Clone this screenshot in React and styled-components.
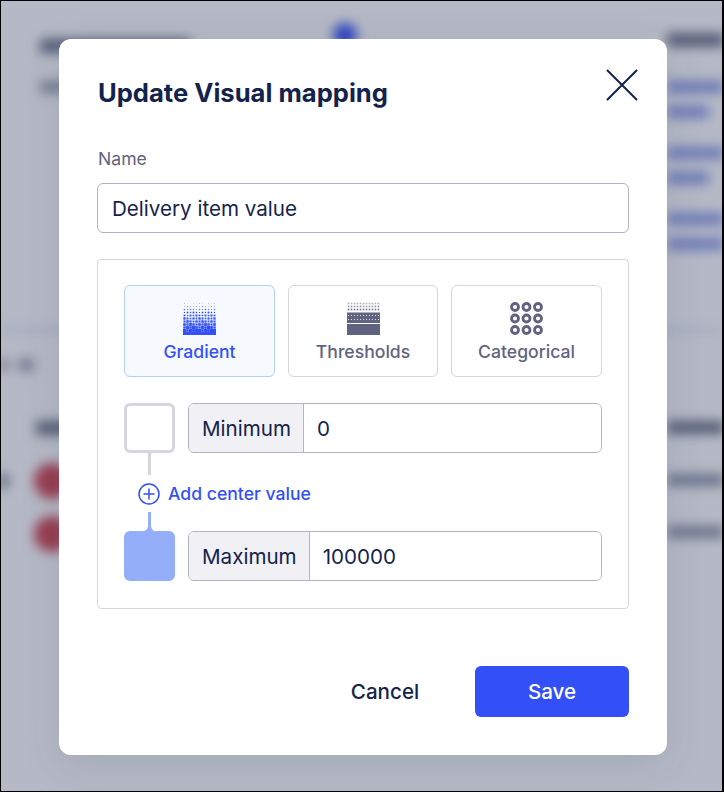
import styled, { createGlobalStyle } from "styled-components";

const GlobalStyle = createGlobalStyle`
  html, body {
    margin: 0;
    padding: 0;
    background: #fff;
  }
  * {
    box-sizing: border-box;
  }
`;

const Page = styled.div`
  position: relative;
  width: 724px;
  height: 792px;
  overflow: hidden;
  font-family: Inter, "Liberation Sans", sans-serif;
  color: #14234b;
`;

/* the page behind the dialog, unreadable in the reference */
const Backdrop = styled.div`
  height: 100%;
  filter: blur(6px);
  display: flex;
  flex-direction: column;
`;

const BackdropTop = styled.div`
  height: 333px;
  flex: none;
  display: flex;
  justify-content: space-between;
  border-bottom: 5px solid #dfe3f5;
  padding: 23px 0 0 40px;
`;

const BackdropColumn = styled.div`
  width: ${(p) => p.$width}px;
  flex: none;
  display: flex;
  flex-direction: column;
  gap: ${(p) => p.$gap || 0}px;
`;

const BackdropRadio = styled.div`
  width: 24px;
  height: 24px;
  border-radius: 50%;
  background: #3350f7;
  margin: 0 0 0 293px;
`;

const Smear = styled.div`
  width: ${(p) => p.$width}px;
  height: ${(p) => p.$height || 12}px;
  flex: none;
  background: ${(p) => p.$color || "#6a7084"};
  margin-top: ${(p) => p.$top || 0}px;
  margin-left: ${(p) => p.$left || 0}px;
`;

const BackdropBottom = styled.div`
  flex: 1;
  display: flex;
  justify-content: space-between;
  padding-top: 26px;
`;

const BackdropFilter = styled.div`
  display: flex;
  gap: 10px;
`;

const BackdropCircles = styled.div`
  display: flex;
  flex-direction: column;
  gap: 17px;
  margin-top: 28px;
`;

const BackdropDotRow = styled.div`
  display: flex;
  align-items: center;
  gap: 26px;
`;

const BackdropDot = styled.div`
  width: 36px;
  height: 36px;
  border-radius: 50%;
  background: #d2434e;
`;

const Overlay = styled.div`
  position: absolute;
  inset: 0;
  background: rgba(43, 55, 89, 0.35);
  border: 1px solid #000;
  border-right-width: 2px;
  display: flex;
  justify-content: center;
  padding: 38px 0 0 3px;
`;

const Dialog = styled.div`
  width: 608px;
  height: 716px;
  background: #fff;
  border-radius: 12px;
  box-shadow: 0 10px 40px rgba(43, 55, 89, 0.12);
  padding: 31px 38px 38px;
  display: flex;
  flex-direction: column;
`;

const Header = styled.div`
  display: flex;
  justify-content: space-between;
  align-items: flex-start;
  height: 77px;
`;

const Title = styled.h2`
  margin: 6px 0 0 1px;
  font-size: 25.6px;
  line-height: 34px;
  font-weight: 700;
  color: #14234b;
`;

const CloseButton = styled.button`
  border: 0;
  background: none;
  padding: 0;
  margin: -1px -9px 0 0;
  width: 32px;
  height: 32px;
  display: flex;
  cursor: pointer;
`;

const FieldLabel = styled.label`
  display: block;
  font-size: 17.6px;
  line-height: 24px;
  color: #5f6380;
  margin: 0 0 12px 1px;
`;

const TextInput = styled.input`
  display: block;
  width: 100%;
  height: 50px;
  border: 1px solid #b1b2c3;
  border-radius: 6px;
  padding: 0 14px;
  font-family: inherit;
  font-size: 20.6px;
  color: #14234b;
  outline: none;
  background: #fff;
`;

const MappingBox = styled.div`
  margin-top: 26px;
  height: 350px;
  border: 1px solid #d5d6df;
  border-radius: 4px;
  padding: 25px 26px;
`;

const TypeTabs = styled.div`
  display: grid;
  grid-template-columns: 151px 150px 151px;
  gap: 13px;
  margin-bottom: 26px;
`;

const TypeTab = styled.button`
  height: 92px;
  border: 1px solid ${(p) => (p.$active ? "#b1d0fb" : "#d5d6df")};
  border-radius: 6px;
  background: ${(p) => (p.$active ? "#f6faff" : "#fff")};
  color: ${(p) => (p.$active ? "#3350f7" : "#5f6380")};
  font-family: inherit;
  font-size: 17.6px;
  font-weight: 500;
  padding: 16px 0 0;
  display: flex;
  flex-direction: column;
  align-items: center;
  gap: 6px;
  cursor: pointer;
`;

const TabIcon = styled.svg`
  display: block;
  width: 33px;
  height: 33px;
  flex: none;
`;

const ValueRow = styled.div`
  display: flex;
  gap: 13px;
`;

const Swatch = styled.div`
  width: 51px;
  height: 50px;
  flex: none;
  border-radius: 6px;
  background: ${(p) => p.$fill || "#fff"};
  border: 3px solid ${(p) => p.$stroke || p.$fill};
`;

const ValueGroup = styled.div`
  flex: 1;
  display: flex;
  height: 50px;
  border: 1px solid #b1b2c3;
  border-radius: 6px;
  overflow: hidden;
`;

const ValueName = styled.span`
  display: flex;
  align-items: center;
  padding: 0 12px 0 13px;
  background: #f0f0f5;
  border-right: 1px solid #b1b2c3;
  font-size: 20.6px;
  color: #14234b;
`;

const ValueInput = styled.input`
  flex: 1;
  min-width: 0;
  border: 0;
  outline: none;
  padding: 0 13px;
  font-family: inherit;
  font-size: 20.6px;
  color: #14234b;
`;

const Stem = styled.svg`
  display: block;
  width: 15px;
  height: ${(p) => p.$height}px;
  margin-left: 18px;
`;

const AddCenter = styled.button`
  height: 37px;
  width: 100%;
  border: 0;
  background: none;
  padding: 0 0 0 14px;
  display: flex;
  align-items: center;
  gap: 8px;
  font-family: inherit;
  font-size: 17.6px;
  font-weight: 500;
  color: #3350f7;
  cursor: pointer;
`;

const Footer = styled.div`
  margin-top: 57px;
  display: flex;
  justify-content: flex-end;
  align-items: center;
  gap: 26px;
`;

const CancelButton = styled.button`
  width: 128px;
  height: 51px;
  border: 0;
  background: none;
  font-family: inherit;
  font-size: 20.6px;
  font-weight: 500;
  color: #14234b;
  padding: 0;
  cursor: pointer;
`;

const SaveButton = styled.button`
  width: 154px;
  height: 51px;
  border: 0;
  border-radius: 6px;
  background: #3350f7;
  font-family: inherit;
  font-size: 20.6px;
  font-weight: 500;
  color: #fff;
  cursor: pointer;
`;

const cells = Array.from({ length: 11 * 11 }, (_, i) => ({
  col: i % 11,
  row: Math.floor(i / 11),
}));

// dither: dots get bigger row by row, some stay small so the white shows through
const GradientIcon = () => (
  <TabIcon viewBox="0 0 33 33" fill="#3350f7">
    {cells.map(({ col, row }) => {
      const jitter = ((col * 7 + row * 13) % 5) * 0.16;
      const size = Math.min(3, 0.8 + (row / 10) * 2.6 - jitter + 0.2);
      const offset = (3 - size) / 2;
      return (
        <rect
          key={`${col}-${row}`}
          x={col * 3 + offset}
          y={row * 3 + offset}
          width={size}
          height={size}
          opacity={row < 3 ? 0.35 + row * 0.2 : 1}
        />
      );
    })}
  </TabIcon>
);

const ThresholdsIcon = () => (
  <TabIcon viewBox="0 0 33 33" fill="#5f6380">
    {cells
      .filter(({ row }) => row < 3)
      .map(({ col, row }) => (
        <rect
          key={`${col}-${row}`}
          x={col * 3 + 0.7}
          y={row * 3 + 0.7}
          width="1.6"
          height="1.6"
          opacity={0.5 + row * 0.2}
        />
      ))}
    <rect x="0" y="10.5" width="33" height="10.5" />
    <rect x="0" y="22" width="33" height="11" />
    {cells
      .filter(({ row }) => row < 2)
      .map(({ col, row }) => (
        <rect
          key={`${col}-${row}`}
          x={col * 3 + 1}
          y={row * 4 + 13}
          width="1"
          height="1"
          fill="#fff"
          opacity="0.8"
        />
      ))}
  </TabIcon>
);

const CategoricalIcon = () => (
  <TabIcon viewBox="0 0 33 33" fill="none" stroke="#5f6380" strokeWidth="2.8">
    {[5, 16.5, 28].map((cy) =>
      [5, 16.5, 28].map((cx) => (
        <circle key={`${cx}-${cy}`} cx={cx} cy={cy} r="3.5" />
      ))
    )}
  </TabIcon>
);

const App = () => {
  return (
    <Page>
      <GlobalStyle />
      <Backdrop aria-hidden="true">
        <BackdropTop>
          <BackdropColumn $width={560}>
            <BackdropRadio />
            <Smear $width={150} $height={14} $top={-8} />
            <Smear $width={40} $top={28} $color="#9a9eae" />
          </BackdropColumn>
          <BackdropColumn $width={57} $gap={13}>
            <Smear $width={57} $height={14} $top={10} />
            <Smear $width={57} $top={21} $color="#8d9be8" />
            <Smear $width={42} $color="#8d9be8" />
            <Smear $width={57} $top={16} $color="#8d9be8" />
            <Smear $width={42} $color="#8d9be8" />
            <Smear $width={57} $top={16} $color="#8d9be8" />
            <Smear $width={57} $color="#8d9be8" />
          </BackdropColumn>
        </BackdropTop>
        <BackdropBottom>
          <BackdropColumn $width={120}>
            <BackdropFilter>
              <Smear $width={8} $color="#9a9eae" />
              <Smear $width={16} $color="#9a9eae" />
            </BackdropFilter>
            <Smear $width={70} $height={14} $top={50} $left={36} />
            <BackdropCircles>
              <BackdropDotRow>
                <Smear $width={8} $height={14} $color="#6a7084" />
                <BackdropDot />
              </BackdropDotRow>
              <BackdropDotRow>
                <Smear $width={8} $color="transparent" />
                <BackdropDot />
              </BackdropDotRow>
            </BackdropCircles>
          </BackdropColumn>
          <BackdropColumn $width={57} $gap={40}>
            <Smear $width={57} $height={13} $top={62} />
            <Smear $width={57} $color="#8d92a4" />
            <Smear $width={57} $color="#8d92a4" />
          </BackdropColumn>
        </BackdropBottom>
      </Backdrop>
      <Overlay>
        <Dialog role="dialog">
          <Header>
            <Title>Update Visual mapping</Title>
            <CloseButton aria-label="Close">
              <svg width="32" height="32" viewBox="0 0 32 32" fill="none" stroke="#14234b" strokeWidth="2" strokeLinecap="round">
                <path d="M1.5 1.5l29 29M30.5 1.5l-29 29" />
              </svg>
            </CloseButton>
          </Header>
          <FieldLabel>Name</FieldLabel>
          <TextInput defaultValue="Delivery item value" />
          <MappingBox>
            <TypeTabs>
              <TypeTab $active>
                <GradientIcon />
                Gradient
              </TypeTab>
              <TypeTab>
                <ThresholdsIcon />
                Thresholds
              </TypeTab>
              <TypeTab>
                <CategoricalIcon />
                Categorical
              </TypeTab>
            </TypeTabs>
            <ValueRow>
              <Swatch $fill="#fff" $stroke="#d5d6df" />
              <ValueGroup>
                <ValueName>Minimum</ValueName>
                <ValueInput defaultValue="0" />
              </ValueGroup>
            </ValueRow>
            <Stem $height={22} viewBox="0 0 15 22" fill="#d5d6df">
              <path d="M6 0h3v20.5c0 1 1 1.5 1 1.5H5s1-.5 1-1.5z" transform="matrix(1 0 0 -1 0 22)" />
            </Stem>
            <AddCenter>
              <svg width="22" height="22" viewBox="0 0 22 22" fill="none" stroke="#3350f7" strokeWidth="1.5">
                <circle cx="11" cy="11" r="10" />
                <path d="M11 5.5v11M5.5 11h11" />
              </svg>
              Add center value
            </AddCenter>
            <Stem $height={19} viewBox="0 0 15 19" fill="#94aefa">
              <path d="M6 0h3v14c0 3 3 5 4 5H2c1 0 4-2 4-5z" />
            </Stem>
            <ValueRow>
              <Swatch $fill="#94aefa" />
              <ValueGroup>
                <ValueName>Maximum</ValueName>
                <ValueInput defaultValue="100000" />
              </ValueGroup>
            </ValueRow>
          </MappingBox>
          <Footer>
            <CancelButton>Cancel</CancelButton>
            <SaveButton>Save</SaveButton>
          </Footer>
        </Dialog>
      </Overlay>
    </Page>
  );
};

export default App;
